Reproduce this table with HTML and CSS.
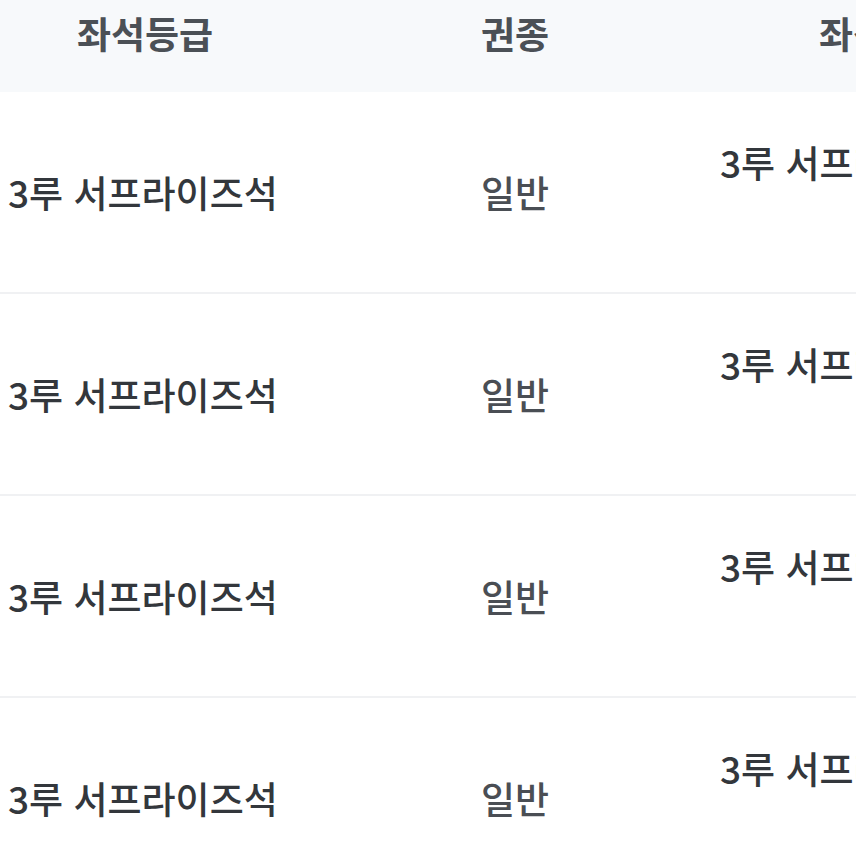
FILE: index.html
```html
<!DOCTYPE html>
<html lang="ko">
<head>
<meta charset="utf-8">
<link rel="stylesheet" href="styles.css">
</head>
<body>
<div class="table">
  <div class="row head">
    <div class="cell c1">좌석등급</div>
    <div class="cell c2">권종</div>
    <div class="cell c3">좌석번호</div>
  </div>
  <div class="row">
    <div class="cell c1">3루 서프라이즈석</div>
    <div class="cell c2">일반</div>
    <div class="cell c3">3루 서프라이즈석</div>
  </div>
  <div class="row">
    <div class="cell c1">3루 서프라이즈석</div>
    <div class="cell c2">일반</div>
    <div class="cell c3">3루 서프라이즈석</div>
  </div>
  <div class="row">
    <div class="cell c1">3루 서프라이즈석</div>
    <div class="cell c2">일반</div>
    <div class="cell c3">3루 서프라이즈석</div>
  </div>
  <div class="row">
    <div class="cell c1">3루 서프라이즈석</div>
    <div class="cell c2">일반</div>
    <div class="cell c3">3루 서프라이즈석</div>
  </div>
</div>
</body>
</html>
```

FILE: styles.css
```css
html, body {
  margin: 0;
  padding: 0;
  background: #ffffff;
  overflow: hidden;
}
body {
  font-family: "Noto Sans CJK KR", "Noto Sans", sans-serif;
  color: #33373c;
}
.table {
  width: 1054px;
}
.row {
  display: grid;
  grid-template-columns: 310px 410px 334px;
  height: 202px;
  border-bottom: 2px solid #f0f1f3;
  box-sizing: border-box;
}
.row.head {
  height: 92px;
  background: #f7f9fb;
  border-bottom: none;
}
.cell {
  display: flex;
  align-items: center;
  font-size: 37px;
  font-weight: 500;
  letter-spacing: 0;
  white-space: nowrap;
  overflow: hidden;
}
.head .cell {
  font-weight: 700;
  color: #4b5056;
  padding-bottom: 26px;
}
.c1 {
  padding-left: 8px;
  padding-right: 20px;
}
.head .c1 {
  justify-content: center;
  padding-left: 0;
}
.c2 {
  justify-content: center;
  color: #4a4e54;
}
.c3 {
  padding-bottom: 60px;
}
.head .c3 {
  justify-content: center;
}
```
